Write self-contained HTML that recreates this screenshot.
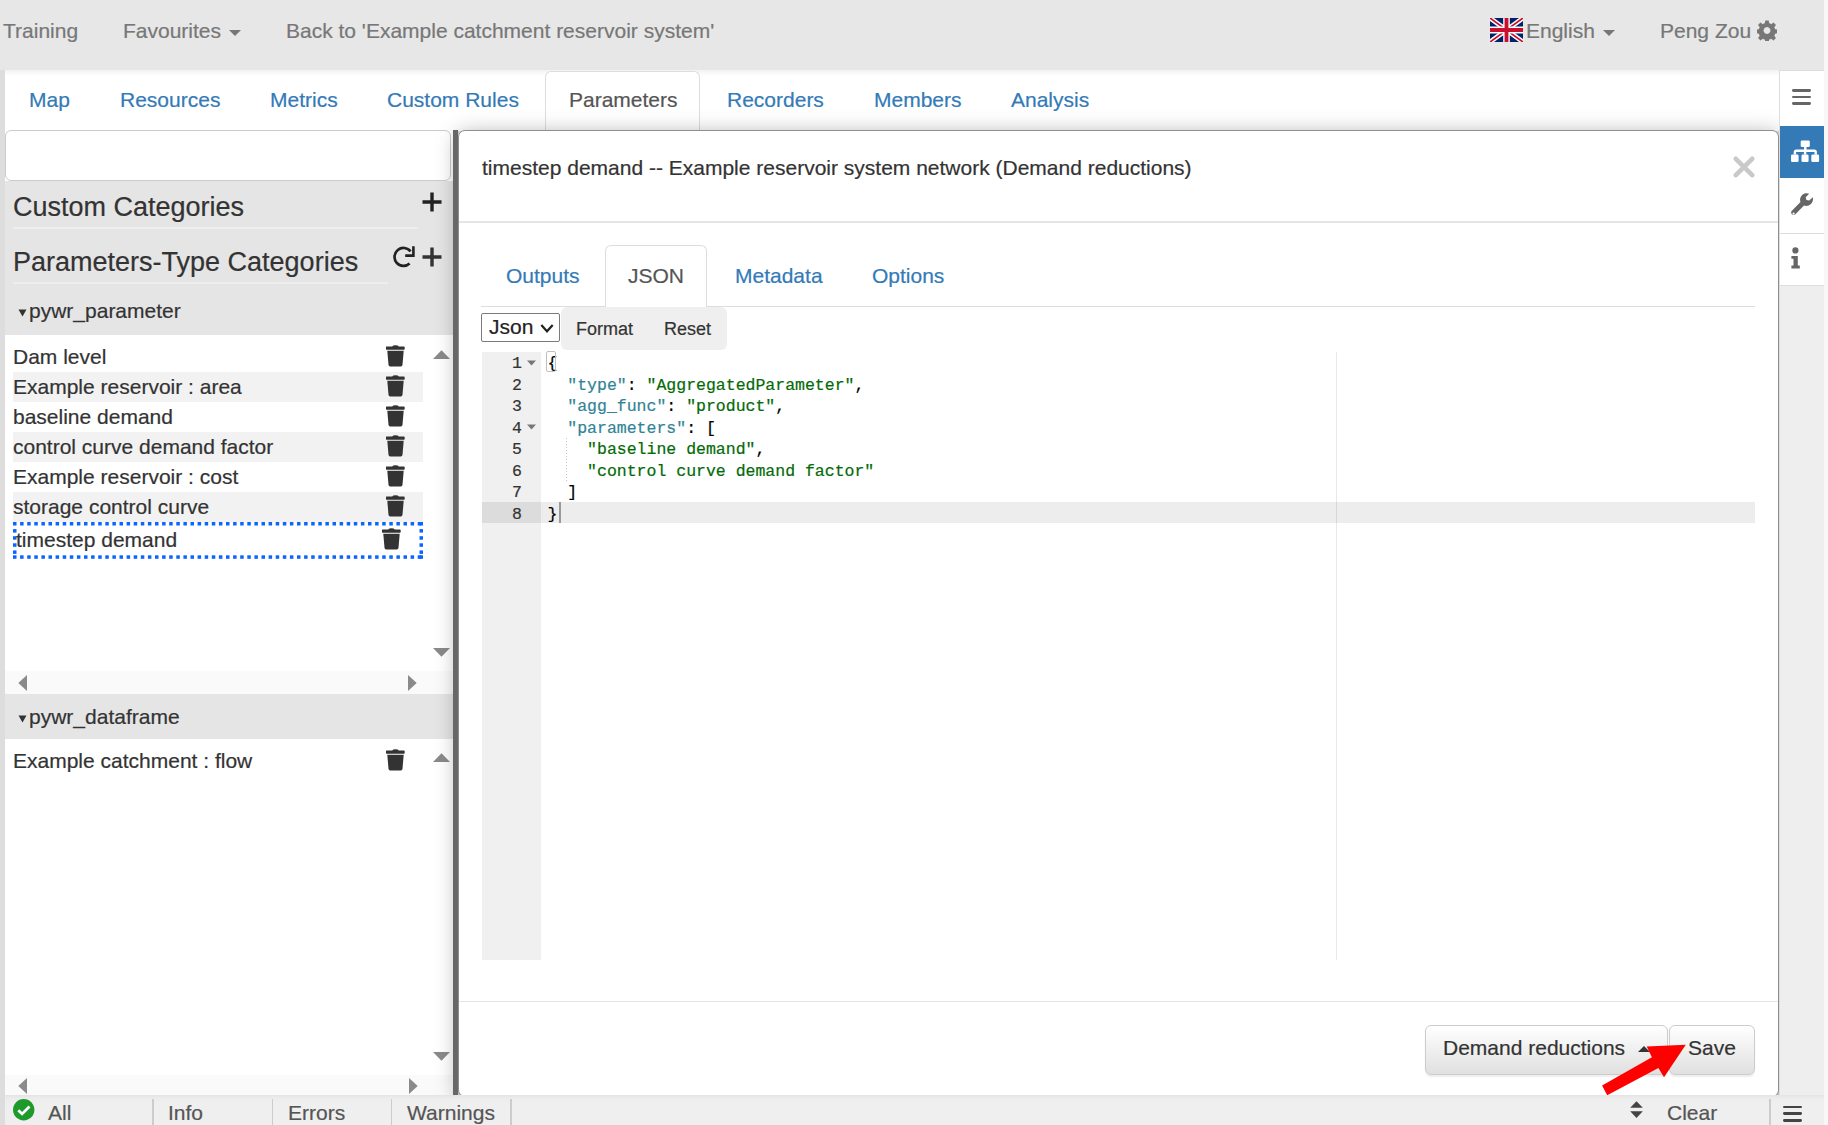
<!DOCTYPE html>
<html><head><meta charset="utf-8">
<style>
*{box-sizing:border-box}
html,body{margin:0;padding:0}
body{width:1828px;height:1125px;overflow:hidden;position:relative;background:#dddddd;font-family:"Liberation Sans",sans-serif;font-size:21px;color:#333}
.a{position:absolute}
.t{position:absolute;white-space:nowrap;line-height:24px}
#nav{left:0;top:0;width:1824px;height:70px;background:#e7e7e7}
#nav .t{color:#777;top:19px}
.caret{position:absolute;width:0;height:0;border-left:6px solid transparent;border-right:6px solid transparent;border-top:6px solid #777}
#tabbar{left:5px;top:70px;width:1774px;height:61px;background:linear-gradient(to bottom,#f2f2f2 0,#fff 6px)}
#tabbar .t{color:#337ab7;top:88px}
#ptab{left:545px;top:71px;width:155px;height:60px;border:1.5px solid #ddd;border-bottom:none;border-radius:6px 6px 0 0;background:#fff}
#left{left:5px;top:130px;width:448px;height:965px;background:#fff;overflow:hidden}
#search{left:5px;top:130px;width:446px;height:51px;border:1.5px solid #ccc;border-radius:6px;background:#fff}
#divider{left:453px;top:130px;width:5px;height:965px;background:#676767}
#modal{left:458px;top:130px;width:1321px;height:966.5px;background:#fff;border:1.5px solid #8f8f8f;border-radius:7px;box-shadow:0 4px 22px rgba(0,0,0,0.35)}
#side{left:1779px;top:70px;width:45px;height:1025px;background:#eee;border-left:1.5px solid #ddd}
#status{left:5px;top:1095px;width:1819px;height:30px;background:linear-gradient(to bottom,#e4e4e4 0,#ececec 3px,#efefef 8px)}
#rstrip{left:1824px;top:0;width:4px;height:1125px;background:#f7f7f7}

.btn{background:linear-gradient(to bottom,#fff 0,#e0e0e0 100%);border:1.5px solid #ccc;box-shadow:inset 0 1.5px 0 rgba(255,255,255,.15),0 1.5px 1.5px rgba(0,0,0,.075)}
.cl{position:absolute;white-space:pre;font-family:"Liberation Mono",monospace;font-size:16.5px;line-height:21.5px;color:#333}
.cl .k{color:#318495}.cl .s{color:#036a07}.cl .p{color:#000}
.t,.cl{-webkit-text-stroke:0.2px currentColor}</style></head><body>
<div id="rstrip" class="a"></div>
<div id="nav" class="a">
  <div class="t" style="left:3px">Training</div>
  <div class="t" style="left:123px">Favourites</div>
  <div class="caret" style="left:229px;top:30px"></div>
  <div class="t" style="left:286px">Back to 'Example catchment reservoir system'</div>
  
<svg class="a" style="left:1490px;top:18px" width="33" height="24" viewBox="0 0 60 40" preserveAspectRatio="none"><rect width="60" height="40" fill="#012169"/><path d="M0 0L60 40M60 0L0 40" stroke="#fff" stroke-width="8"/><path d="M0 0L60 40M60 0L0 40" stroke="#C8102E" stroke-width="3"/><path d="M30 0V40M0 20H60" stroke="#fff" stroke-width="12"/><path d="M30 0V40M0 20H60" stroke="#C8102E" stroke-width="7"/></svg>
<svg class="a" style="left:1757px;top:19.5px" width="20" height="21" viewBox="0 0 20 20"><path fill="#777" fill-rule="evenodd" d="M8.3 0h3.4l0.5 2.8a7.5 7.5 0 0 1 2 0.85l2.35-1.65 2.4 2.4-1.65 2.35a7.5 7.5 0 0 1 0.85 2l2.85 0.5v3.4l-2.85 0.5a7.5 7.5 0 0 1-0.85 2l1.65 2.35-2.4 2.4-2.35-1.65a7.5 7.5 0 0 1-2 0.85l-0.5 2.85h-3.4l-0.5-2.85a7.5 7.5 0 0 1-2-0.85l-2.35 1.65-2.4-2.4 1.65-2.35a7.5 7.5 0 0 1-0.85-2l-2.85-0.5v-3.4l2.85-0.5a7.5 7.5 0 0 1 0.85-2l-1.65-2.35 2.4-2.4 2.35 1.65a7.5 7.5 0 0 1 2-0.85zM10 6.6a3.4 3.4 0 1 0 0.01 0z"/></svg>
<div class="t" style="left:1526px">English</div>
  <div class="caret" style="left:1603px;top:30px"></div>
  <div class="t" style="left:1660px">Peng Zou</div>
</div>
<div id="tabbar" class="a"></div>
<div id="ptab" class="a"></div>
<div id="tabs">
  <div class="t" style="left:29px;top:88px;color:#337ab7">Map</div>
  <div class="t" style="left:120px;top:88px;color:#337ab7">Resources</div>
  <div class="t" style="left:270px;top:88px;color:#337ab7">Metrics</div>
  <div class="t" style="left:387px;top:88px;color:#337ab7">Custom Rules</div>
  <div class="t" style="left:569px;top:88px;color:#555">Parameters</div>
  <div class="t" style="left:727px;top:88px;color:#337ab7">Recorders</div>
  <div class="t" style="left:874px;top:88px;color:#337ab7">Members</div>
  <div class="t" style="left:1011px;top:88px;color:#337ab7">Analysis</div>
</div>
<div id="left" class="a"></div>
<div id="search" class="a"></div>

<div id="lp">
  <div class="a" style="left:5px;top:181px;width:448px;height:154px;background:#e5e5e5"></div>
  <div class="t" style="left:13px;top:192px;font-size:27px;line-height:30px;color:#333">Custom Categories</div>
  <div class="a" style="left:13px;top:227px;width:405px;height:1.5px;background:#eeeeee"></div>
  <svg class="a" style="left:422px;top:192px" width="20" height="20" viewBox="0 0 20 20"><path d="M8.3 0.5h3.4v7.8h7.8v3.4h-7.8v7.8h-3.4v-7.8h-7.8v-3.4h7.8z" fill="#222"/></svg>
  <div class="t" style="left:13px;top:247px;font-size:27px;line-height:30px;color:#333">Parameters-Type Categories</div>
  <div class="a" style="left:13px;top:282px;width:375px;height:1.5px;background:#eeeeee"></div>
  <svg class="a" style="left:393px;top:246px" width="22" height="22" viewBox="0 0 22 22"><path d="M16.6 17.6A9 9 0 1 1 17.6 5.4" fill="none" stroke="#222" stroke-width="2.7"/><path d="M20.4 0.2V9.6H12.2" fill="none" stroke="#222" stroke-width="2.6"/></svg>
  <svg class="a" style="left:422px;top:247px" width="20" height="20" viewBox="0 0 20 20"><path d="M8.3 0.5h3.4v7.8h7.8v3.4h-7.8v7.8h-3.4v-7.8h-7.8v-3.4h7.8z" fill="#333"/></svg>
  <svg class="a" style="left:18px;top:309px" width="9" height="8" viewBox="0 0 9 8"><path d="M0.5 0.5h8l-4 7z" fill="#333"/></svg>
  <div class="t" style="left:29px;top:299px;color:#333">pywr_parameter</div>
  <div class="t" style="left:13px;top:345px;color:#333">Dam level</div><svg class="a" style="left:386px;top:345px" width="19" height="22" viewBox="0 0 19 22"><path d="M6.2 1.6q0.6-1.4 3.3-1.4q2.7 0 3.3 1.4h5.1q0.8 0 0.8 0.8v1.5q0 0.8-0.8 0.8h-17.4q-0.8 0-0.8-0.8v-1.5q0-0.8 0.8-0.8z" fill="#333"/><path d="M1.3 5.8h16.4l-1.2 14q-0.2 1.7-1.7 1.7h-10.6q-1.5 0-1.7-1.7z" fill="#333"/></svg><div class="a" style="left:13px;top:372px;width:410px;height:30px;background:#f2f2f2"></div><div class="t" style="left:13px;top:375px;color:#333">Example reservoir : area</div><svg class="a" style="left:386px;top:375px" width="19" height="22" viewBox="0 0 19 22"><path d="M6.2 1.6q0.6-1.4 3.3-1.4q2.7 0 3.3 1.4h5.1q0.8 0 0.8 0.8v1.5q0 0.8-0.8 0.8h-17.4q-0.8 0-0.8-0.8v-1.5q0-0.8 0.8-0.8z" fill="#333"/><path d="M1.3 5.8h16.4l-1.2 14q-0.2 1.7-1.7 1.7h-10.6q-1.5 0-1.7-1.7z" fill="#333"/></svg><div class="t" style="left:13px;top:405px;color:#333">baseline demand</div><svg class="a" style="left:386px;top:405px" width="19" height="22" viewBox="0 0 19 22"><path d="M6.2 1.6q0.6-1.4 3.3-1.4q2.7 0 3.3 1.4h5.1q0.8 0 0.8 0.8v1.5q0 0.8-0.8 0.8h-17.4q-0.8 0-0.8-0.8v-1.5q0-0.8 0.8-0.8z" fill="#333"/><path d="M1.3 5.8h16.4l-1.2 14q-0.2 1.7-1.7 1.7h-10.6q-1.5 0-1.7-1.7z" fill="#333"/></svg><div class="a" style="left:13px;top:432px;width:410px;height:30px;background:#f2f2f2"></div><div class="t" style="left:13px;top:435px;color:#333">control curve demand factor</div><svg class="a" style="left:386px;top:435px" width="19" height="22" viewBox="0 0 19 22"><path d="M6.2 1.6q0.6-1.4 3.3-1.4q2.7 0 3.3 1.4h5.1q0.8 0 0.8 0.8v1.5q0 0.8-0.8 0.8h-17.4q-0.8 0-0.8-0.8v-1.5q0-0.8 0.8-0.8z" fill="#333"/><path d="M1.3 5.8h16.4l-1.2 14q-0.2 1.7-1.7 1.7h-10.6q-1.5 0-1.7-1.7z" fill="#333"/></svg><div class="t" style="left:13px;top:465px;color:#333">Example reservoir : cost</div><svg class="a" style="left:386px;top:465px" width="19" height="22" viewBox="0 0 19 22"><path d="M6.2 1.6q0.6-1.4 3.3-1.4q2.7 0 3.3 1.4h5.1q0.8 0 0.8 0.8v1.5q0 0.8-0.8 0.8h-17.4q-0.8 0-0.8-0.8v-1.5q0-0.8 0.8-0.8z" fill="#333"/><path d="M1.3 5.8h16.4l-1.2 14q-0.2 1.7-1.7 1.7h-10.6q-1.5 0-1.7-1.7z" fill="#333"/></svg><div class="a" style="left:13px;top:492px;width:410px;height:30px;background:#f2f2f2"></div><div class="t" style="left:13px;top:495px;color:#333">storage control curve</div><svg class="a" style="left:386px;top:495px" width="19" height="22" viewBox="0 0 19 22"><path d="M6.2 1.6q0.6-1.4 3.3-1.4q2.7 0 3.3 1.4h5.1q0.8 0 0.8 0.8v1.5q0 0.8-0.8 0.8h-17.4q-0.8 0-0.8-0.8v-1.5q0-0.8 0.8-0.8z" fill="#333"/><path d="M1.3 5.8h16.4l-1.2 14q-0.2 1.7-1.7 1.7h-10.6q-1.5 0-1.7-1.7z" fill="#333"/></svg><svg class="a" style="left:13px;top:522px" width="411" height="37" viewBox="0 0 411 37"><rect fill="#0a64ff" x="0.0" y="0" width="3.5" height="3.5"/><rect fill="#0a64ff" x="0.0" y="33.3" width="3.5" height="3.5"/><rect fill="#0a64ff" x="7.1" y="0" width="3.5" height="3.5"/><rect fill="#0a64ff" x="7.1" y="33.3" width="3.5" height="3.5"/><rect fill="#0a64ff" x="14.2" y="0" width="3.5" height="3.5"/><rect fill="#0a64ff" x="14.2" y="33.3" width="3.5" height="3.5"/><rect fill="#0a64ff" x="21.3" y="0" width="3.5" height="3.5"/><rect fill="#0a64ff" x="21.3" y="33.3" width="3.5" height="3.5"/><rect fill="#0a64ff" x="28.4" y="0" width="3.5" height="3.5"/><rect fill="#0a64ff" x="28.4" y="33.3" width="3.5" height="3.5"/><rect fill="#0a64ff" x="35.5" y="0" width="3.5" height="3.5"/><rect fill="#0a64ff" x="35.5" y="33.3" width="3.5" height="3.5"/><rect fill="#0a64ff" x="42.6" y="0" width="3.5" height="3.5"/><rect fill="#0a64ff" x="42.6" y="33.3" width="3.5" height="3.5"/><rect fill="#0a64ff" x="49.7" y="0" width="3.5" height="3.5"/><rect fill="#0a64ff" x="49.7" y="33.3" width="3.5" height="3.5"/><rect fill="#0a64ff" x="56.8" y="0" width="3.5" height="3.5"/><rect fill="#0a64ff" x="56.8" y="33.3" width="3.5" height="3.5"/><rect fill="#0a64ff" x="63.9" y="0" width="3.5" height="3.5"/><rect fill="#0a64ff" x="63.9" y="33.3" width="3.5" height="3.5"/><rect fill="#0a64ff" x="71.0" y="0" width="3.5" height="3.5"/><rect fill="#0a64ff" x="71.0" y="33.3" width="3.5" height="3.5"/><rect fill="#0a64ff" x="78.1" y="0" width="3.5" height="3.5"/><rect fill="#0a64ff" x="78.1" y="33.3" width="3.5" height="3.5"/><rect fill="#0a64ff" x="85.2" y="0" width="3.5" height="3.5"/><rect fill="#0a64ff" x="85.2" y="33.3" width="3.5" height="3.5"/><rect fill="#0a64ff" x="92.3" y="0" width="3.5" height="3.5"/><rect fill="#0a64ff" x="92.3" y="33.3" width="3.5" height="3.5"/><rect fill="#0a64ff" x="99.4" y="0" width="3.5" height="3.5"/><rect fill="#0a64ff" x="99.4" y="33.3" width="3.5" height="3.5"/><rect fill="#0a64ff" x="106.5" y="0" width="3.5" height="3.5"/><rect fill="#0a64ff" x="106.5" y="33.3" width="3.5" height="3.5"/><rect fill="#0a64ff" x="113.6" y="0" width="3.5" height="3.5"/><rect fill="#0a64ff" x="113.6" y="33.3" width="3.5" height="3.5"/><rect fill="#0a64ff" x="120.7" y="0" width="3.5" height="3.5"/><rect fill="#0a64ff" x="120.7" y="33.3" width="3.5" height="3.5"/><rect fill="#0a64ff" x="127.8" y="0" width="3.5" height="3.5"/><rect fill="#0a64ff" x="127.8" y="33.3" width="3.5" height="3.5"/><rect fill="#0a64ff" x="134.9" y="0" width="3.5" height="3.5"/><rect fill="#0a64ff" x="134.9" y="33.3" width="3.5" height="3.5"/><rect fill="#0a64ff" x="142.0" y="0" width="3.5" height="3.5"/><rect fill="#0a64ff" x="142.0" y="33.3" width="3.5" height="3.5"/><rect fill="#0a64ff" x="149.1" y="0" width="3.5" height="3.5"/><rect fill="#0a64ff" x="149.1" y="33.3" width="3.5" height="3.5"/><rect fill="#0a64ff" x="156.2" y="0" width="3.5" height="3.5"/><rect fill="#0a64ff" x="156.2" y="33.3" width="3.5" height="3.5"/><rect fill="#0a64ff" x="163.3" y="0" width="3.5" height="3.5"/><rect fill="#0a64ff" x="163.3" y="33.3" width="3.5" height="3.5"/><rect fill="#0a64ff" x="170.4" y="0" width="3.5" height="3.5"/><rect fill="#0a64ff" x="170.4" y="33.3" width="3.5" height="3.5"/><rect fill="#0a64ff" x="177.5" y="0" width="3.5" height="3.5"/><rect fill="#0a64ff" x="177.5" y="33.3" width="3.5" height="3.5"/><rect fill="#0a64ff" x="184.6" y="0" width="3.5" height="3.5"/><rect fill="#0a64ff" x="184.6" y="33.3" width="3.5" height="3.5"/><rect fill="#0a64ff" x="191.7" y="0" width="3.5" height="3.5"/><rect fill="#0a64ff" x="191.7" y="33.3" width="3.5" height="3.5"/><rect fill="#0a64ff" x="198.8" y="0" width="3.5" height="3.5"/><rect fill="#0a64ff" x="198.8" y="33.3" width="3.5" height="3.5"/><rect fill="#0a64ff" x="205.9" y="0" width="3.5" height="3.5"/><rect fill="#0a64ff" x="205.9" y="33.3" width="3.5" height="3.5"/><rect fill="#0a64ff" x="213.0" y="0" width="3.5" height="3.5"/><rect fill="#0a64ff" x="213.0" y="33.3" width="3.5" height="3.5"/><rect fill="#0a64ff" x="220.1" y="0" width="3.5" height="3.5"/><rect fill="#0a64ff" x="220.1" y="33.3" width="3.5" height="3.5"/><rect fill="#0a64ff" x="227.2" y="0" width="3.5" height="3.5"/><rect fill="#0a64ff" x="227.2" y="33.3" width="3.5" height="3.5"/><rect fill="#0a64ff" x="234.3" y="0" width="3.5" height="3.5"/><rect fill="#0a64ff" x="234.3" y="33.3" width="3.5" height="3.5"/><rect fill="#0a64ff" x="241.4" y="0" width="3.5" height="3.5"/><rect fill="#0a64ff" x="241.4" y="33.3" width="3.5" height="3.5"/><rect fill="#0a64ff" x="248.5" y="0" width="3.5" height="3.5"/><rect fill="#0a64ff" x="248.5" y="33.3" width="3.5" height="3.5"/><rect fill="#0a64ff" x="255.6" y="0" width="3.5" height="3.5"/><rect fill="#0a64ff" x="255.6" y="33.3" width="3.5" height="3.5"/><rect fill="#0a64ff" x="262.7" y="0" width="3.5" height="3.5"/><rect fill="#0a64ff" x="262.7" y="33.3" width="3.5" height="3.5"/><rect fill="#0a64ff" x="269.8" y="0" width="3.5" height="3.5"/><rect fill="#0a64ff" x="269.8" y="33.3" width="3.5" height="3.5"/><rect fill="#0a64ff" x="276.9" y="0" width="3.5" height="3.5"/><rect fill="#0a64ff" x="276.9" y="33.3" width="3.5" height="3.5"/><rect fill="#0a64ff" x="284.0" y="0" width="3.5" height="3.5"/><rect fill="#0a64ff" x="284.0" y="33.3" width="3.5" height="3.5"/><rect fill="#0a64ff" x="291.1" y="0" width="3.5" height="3.5"/><rect fill="#0a64ff" x="291.1" y="33.3" width="3.5" height="3.5"/><rect fill="#0a64ff" x="298.2" y="0" width="3.5" height="3.5"/><rect fill="#0a64ff" x="298.2" y="33.3" width="3.5" height="3.5"/><rect fill="#0a64ff" x="305.3" y="0" width="3.5" height="3.5"/><rect fill="#0a64ff" x="305.3" y="33.3" width="3.5" height="3.5"/><rect fill="#0a64ff" x="312.4" y="0" width="3.5" height="3.5"/><rect fill="#0a64ff" x="312.4" y="33.3" width="3.5" height="3.5"/><rect fill="#0a64ff" x="319.5" y="0" width="3.5" height="3.5"/><rect fill="#0a64ff" x="319.5" y="33.3" width="3.5" height="3.5"/><rect fill="#0a64ff" x="326.6" y="0" width="3.5" height="3.5"/><rect fill="#0a64ff" x="326.6" y="33.3" width="3.5" height="3.5"/><rect fill="#0a64ff" x="333.7" y="0" width="3.5" height="3.5"/><rect fill="#0a64ff" x="333.7" y="33.3" width="3.5" height="3.5"/><rect fill="#0a64ff" x="340.8" y="0" width="3.5" height="3.5"/><rect fill="#0a64ff" x="340.8" y="33.3" width="3.5" height="3.5"/><rect fill="#0a64ff" x="347.9" y="0" width="3.5" height="3.5"/><rect fill="#0a64ff" x="347.9" y="33.3" width="3.5" height="3.5"/><rect fill="#0a64ff" x="355.0" y="0" width="3.5" height="3.5"/><rect fill="#0a64ff" x="355.0" y="33.3" width="3.5" height="3.5"/><rect fill="#0a64ff" x="362.1" y="0" width="3.5" height="3.5"/><rect fill="#0a64ff" x="362.1" y="33.3" width="3.5" height="3.5"/><rect fill="#0a64ff" x="369.2" y="0" width="3.5" height="3.5"/><rect fill="#0a64ff" x="369.2" y="33.3" width="3.5" height="3.5"/><rect fill="#0a64ff" x="376.3" y="0" width="3.5" height="3.5"/><rect fill="#0a64ff" x="376.3" y="33.3" width="3.5" height="3.5"/><rect fill="#0a64ff" x="383.4" y="0" width="3.5" height="3.5"/><rect fill="#0a64ff" x="383.4" y="33.3" width="3.5" height="3.5"/><rect fill="#0a64ff" x="390.5" y="0" width="3.5" height="3.5"/><rect fill="#0a64ff" x="390.5" y="33.3" width="3.5" height="3.5"/><rect fill="#0a64ff" x="397.6" y="0" width="3.5" height="3.5"/><rect fill="#0a64ff" x="397.6" y="33.3" width="3.5" height="3.5"/><rect fill="#0a64ff" x="404.7" y="0" width="3.5" height="3.5"/><rect fill="#0a64ff" x="404.7" y="33.3" width="3.5" height="3.5"/><rect fill="#0a64ff" x="0" y="7.1" width="3.5" height="3.5"/><rect fill="#0a64ff" x="406.5" y="7.1" width="3.5" height="3.5"/><rect fill="#0a64ff" x="0" y="14.2" width="3.5" height="3.5"/><rect fill="#0a64ff" x="406.5" y="14.2" width="3.5" height="3.5"/><rect fill="#0a64ff" x="0" y="21.3" width="3.5" height="3.5"/><rect fill="#0a64ff" x="406.5" y="21.3" width="3.5" height="3.5"/><rect fill="#0a64ff" x="0" y="28.4" width="3.5" height="3.5"/><rect fill="#0a64ff" x="406.5" y="28.4" width="3.5" height="3.5"/><rect fill="#0a64ff" x="406.5" y="0" width="3.5" height="3.5"/><rect fill="#0a64ff" x="406.5" y="33.3" width="3.5" height="3.5"/></svg><div class="t" style="left:16px;top:528px;color:#333">timestep demand</div><svg class="a" style="left:382px;top:528px" width="19" height="22" viewBox="0 0 19 22"><path d="M6.2 1.6q0.6-1.4 3.3-1.4q2.7 0 3.3 1.4h5.1q0.8 0 0.8 0.8v1.5q0 0.8-0.8 0.8h-17.4q-0.8 0-0.8-0.8v-1.5q0-0.8 0.8-0.8z" fill="#333"/><path d="M1.3 5.8h16.4l-1.2 14q-0.2 1.7-1.7 1.7h-10.6q-1.5 0-1.7-1.7z" fill="#333"/></svg>
  <div class="a" style="left:5px;top:671px;width:448px;height:23px;background:#fafafa"></div>
  <div class="a" style="left:5px;top:694px;width:448px;height:45px;background:#e5e5e5"></div>
  <svg class="a" style="left:18px;top:715px" width="9" height="8" viewBox="0 0 9 8"><path d="M0.5 0.5h8l-4 7z" fill="#333"/></svg>
  <div class="t" style="left:29px;top:705px;color:#333">pywr_dataframe</div>
  <div class="t" style="left:13px;top:749px;color:#333">Example catchment : flow</div>
  <svg class="a" style="left:386px;top:749px" width="19" height="22" viewBox="0 0 19 22"><path d="M6.2 1.6q0.6-1.4 3.3-1.4q2.7 0 3.3 1.4h5.1q0.8 0 0.8 0.8v1.5q0 0.8-0.8 0.8h-17.4q-0.8 0-0.8-0.8v-1.5q0-0.8 0.8-0.8z" fill="#333"/><path d="M1.3 5.8h16.4l-1.2 14q-0.2 1.7-1.7 1.7h-10.6q-1.5 0-1.7-1.7z" fill="#333"/></svg>
  <div class="a" style="left:5px;top:1075px;width:448px;height:20px;background:#fafafa"></div>
  <svg class="a" style="left:433px;top:350px" width="17" height="9" viewBox="0 0 17 9"><path d="M0 9L8.5 0.3L17 9z" fill="#8a8a8a"/></svg><svg class="a" style="left:433px;top:648px" width="17" height="9" viewBox="0 0 17 9"><path d="M0 0L8.5 8.7L17 0z" fill="#8a8a8a"/></svg><svg class="a" style="left:18px;top:675px" width="9" height="16" viewBox="0 0 9 16"><path d="M9 0L0.3 8L9 16z" fill="#8a8a8a"/></svg><svg class="a" style="left:408px;top:675px" width="9" height="16" viewBox="0 0 9 16"><path d="M0 0L8.7 8L0 16z" fill="#8a8a8a"/></svg><svg class="a" style="left:433px;top:753px" width="17" height="9" viewBox="0 0 17 9"><path d="M0 9L8.5 0.3L17 9z" fill="#8a8a8a"/></svg><svg class="a" style="left:433px;top:1052px" width="17" height="9" viewBox="0 0 17 9"><path d="M0 0L8.5 8.7L17 0z" fill="#8a8a8a"/></svg><svg class="a" style="left:18px;top:1078px" width="9" height="16" viewBox="0 0 9 16"><path d="M9 0L0.3 8L9 16z" fill="#8a8a8a"/></svg><svg class="a" style="left:409px;top:1078px" width="9" height="16" viewBox="0 0 9 16"><path d="M0 0L8.7 8L0 16z" fill="#8a8a8a"/></svg>
  
</div>



<div id="modal" class="a"></div>

<div id="mc">
  <div class="t" style="left:482px;top:156px;color:#333">timestep demand -- Example reservoir system network (Demand reductions)</div>
  <svg class="a" style="left:1733px;top:156px" width="22" height="22" viewBox="0 0 22 22"><path d="M2.8 2.8L19.2 19.2M19.2 2.8L2.8 19.2" stroke="#c9c9c9" stroke-width="4.6" stroke-linecap="round"/></svg>
  <div class="a" style="left:459px;top:221px;width:1319px;height:1.5px;background:#e5e5e5"></div>
  <div class="a" style="left:481px;top:305.5px;width:1274px;height:1.5px;background:#ddd"></div>
  <div class="a" style="left:605px;top:245px;width:101.5px;height:62px;border:1.5px solid #ddd;border-bottom:none;border-radius:6px 6px 0 0;background:#fff"></div>
  <div class="t" style="left:506px;top:264px;color:#337ab7">Outputs</div>
  <div class="t" style="left:628px;top:264px;color:#555">JSON</div>
  <div class="t" style="left:735px;top:264px;color:#337ab7">Metadata</div>
  <div class="t" style="left:872px;top:264px;color:#337ab7">Options</div>
  <div class="a" style="left:561px;top:307px;width:165.5px;height:43px;background:#efefef;border-radius:6px"></div>
  <div class="a" style="left:481.3px;top:313px;width:79px;height:28.7px;border:1.7px solid #7a7a7a;border-radius:2px;background:#fff"></div>
  <div class="t" style="left:489px;top:315px;color:#222;font-size:21px">Json</div>
  <svg class="a" style="left:540.2px;top:323px" width="14" height="11" viewBox="0 0 14 11"><path d="M1.3 2L7 8.3L12.7 2" fill="none" stroke="#222" stroke-width="2.2"/></svg>
  <div class="t" style="left:576px;top:317px;color:#333;font-size:18px">Format</div>
  <div class="t" style="left:664px;top:317px;color:#333;font-size:18px">Reset</div>
  <div class="a" style="left:481.5px;top:351.5px;width:59.5px;height:608px;background:#f0f0f0"></div>
  <div class="a" style="left:1336px;top:351.5px;width:1px;height:608px;background:#e8e8e8"></div>
  <div class="a" style="left:481.5px;top:501.5px;width:59.5px;height:21px;background:#dcdcdc"></div>
  <div class="a" style="left:541px;top:501.5px;width:1214px;height:21px;background:rgba(0,0,0,0.07)"></div>
  <div class="cl" style="top:353.0px;left:512px;width:10px;text-align:right">1</div><svg class="a" style="left:527px;top:359.5px" width="9" height="6" viewBox="0 0 9 6"><path d="M0 0.5h9l-4.5 5z" fill="#777"/></svg><div class="cl" style="top:353.0px;left:547.5px"><span class="p">{</span></div><div class="cl" style="top:374.5px;left:512px;width:10px;text-align:right">2</div><div class="cl" style="top:374.5px;left:547.5px">  <span class="k">"type"</span><span class="p">: </span><span class="s">"AggregatedParameter"</span><span class="p">,</span></div><div class="cl" style="top:396.0px;left:512px;width:10px;text-align:right">3</div><div class="cl" style="top:396.0px;left:547.5px">  <span class="k">"agg_func"</span><span class="p">: </span><span class="s">"product"</span><span class="p">,</span></div><div class="cl" style="top:417.5px;left:512px;width:10px;text-align:right">4</div><svg class="a" style="left:527px;top:424.0px" width="9" height="6" viewBox="0 0 9 6"><path d="M0 0.5h9l-4.5 5z" fill="#777"/></svg><div class="cl" style="top:417.5px;left:547.5px">  <span class="k">"parameters"</span><span class="p">: [</span></div><div class="cl" style="top:439.0px;left:512px;width:10px;text-align:right">5</div><div class="cl" style="top:439.0px;left:547.5px">    <span class="s">"baseline demand"</span><span class="p">,</span></div><div class="cl" style="top:460.5px;left:512px;width:10px;text-align:right">6</div><div class="cl" style="top:460.5px;left:547.5px">    <span class="s">"control curve demand factor"</span></div><div class="cl" style="top:482.0px;left:512px;width:10px;text-align:right">7</div><div class="cl" style="top:482.0px;left:547.5px">  <span class="p">]</span></div><div class="cl" style="top:503.5px;left:512px;width:10px;text-align:right">8</div><div class="cl" style="top:503.5px;left:547.5px"><span class="p">}</span></div>

  <div class="a" style="left:546px;top:351px;width:10px;height:21px;border:1px solid #c0c0c0;border-radius:2px"></div>
  <div class="a" style="left:558.5px;top:501.5px;width:2px;height:21.5px;background:#9a9a9a"></div>
  <div class="a" style="left:565.5px;top:437.5px;width:1px;height:43px;background:repeating-linear-gradient(to bottom,#c8c8c8 0,#c8c8c8 1px,transparent 1px,transparent 3px)"></div>
  <div class="a" style="left:459px;top:1000.5px;width:1319px;height:1.5px;background:#e5e5e5"></div>
  <div class="a btn" style="left:1424.5px;top:1025px;width:243.5px;height:49.5px;border-radius:6px"></div>
  <div class="t" style="left:1443px;top:1036px;color:#333">Demand reductions</div>
  <div class="a" style="left:1638px;top:1046px;width:0;height:0;border-left:6px solid transparent;border-right:6px solid transparent;border-bottom:6px solid #333"></div>
  <div class="a btn" style="left:1669px;top:1025px;width:85.5px;height:49.5px;border-radius:6px"></div>
  <div class="t" style="left:1688px;top:1036px;color:#333">Save</div>
  <svg class="a" style="left:1590px;top:1030px" width="110" height="70" viewBox="1590 1030 110 70"><path d="M1602.1 1085.6L1651.9 1057.2L1646.7 1046.5L1685.8 1044.7L1664 1077.2L1658.4 1067.9L1607.2 1095.3z" fill="#ff0000"/></svg>
</div>


<div id="status" class="a"></div>
<svg class="a" style="left:12.5px;top:1099px" width="22" height="22" viewBox="0 0 22 22"><circle cx="10.7" cy="10.7" r="10.7" fill="#1e9a2a"/><path d="M5.3 11.2l3.8 3.7 7.4-7.4" fill="none" stroke="#fff" stroke-width="2.8"/></svg>
<div class="t" style="left:48px;top:1101px;color:#555">All</div>
<div class="a" style="left:152px;top:1099px;width:1.5px;height:26px;background:#ccc"></div>
<div class="t" style="left:168px;top:1101px;color:#555">Info</div>
<div class="a" style="left:271.5px;top:1099px;width:1.5px;height:26px;background:#ccc"></div>
<div class="t" style="left:288px;top:1101px;color:#555">Errors</div>
<div class="a" style="left:390.5px;top:1099px;width:1.5px;height:26px;background:#ccc"></div>
<div class="t" style="left:407px;top:1101px;color:#555">Warnings</div>
<div class="a" style="left:510px;top:1099px;width:1.5px;height:26px;background:#ccc"></div>
<svg class="a" style="left:1629.5px;top:1101px" width="13" height="18" viewBox="0 0 13 18"><path d="M0.2 6.7L6.5 0.2L12.8 6.7z M0.2 10.2L6.5 17L12.8 10.2z" fill="#444"/></svg>
<div class="t" style="left:1667px;top:1101px;color:#555">Clear</div>
<div class="a" style="left:1769px;top:1099px;width:1.5px;height:26px;background:#ccc"></div>
<div class="a" style="left:1782.5px;top:1105.5px;width:19px;height:2.8px;background:#444;border-radius:1.4px"></div>
<div class="a" style="left:1782.5px;top:1112.2px;width:19px;height:2.8px;background:#444;border-radius:1.4px"></div>
<div class="a" style="left:1782.5px;top:1119px;width:19px;height:2.8px;background:#444;border-radius:1.4px"></div>
<div id="divider" class="a"></div>
<div class="a" style="left:1823px;top:70px;width:1.3px;height:1025px;background:#e3e3e3"></div>
<div id="side" class="a"></div>
<div class="a" style="left:1779px;top:70px;width:45px;height:56px;background:#fff;border-top:1.5px solid #ddd;border-left:1.5px solid #ddd"></div>
<div class="a" style="left:1791.5px;top:89px;width:19px;height:2.8px;background:#666;border-radius:1.4px"></div>
<div class="a" style="left:1791.5px;top:95.7px;width:19px;height:2.8px;background:#666;border-radius:1.4px"></div>
<div class="a" style="left:1791.5px;top:102.4px;width:19px;height:2.8px;background:#666;border-radius:1.4px"></div>
<div class="a" style="left:1780px;top:125.5px;width:43.5px;height:52px;background:#337ab7"></div>
<svg class="a" style="left:1791px;top:139.5px" width="29" height="23" viewBox="0 0 29 23"><rect x="9.7" y="0.4" width="9.1" height="6.6" rx="1.3" fill="#fff"/><path d="M14.3 6.5v4.1M3.9 14.6v-2.6q0-1.3 1.3-1.3h18.2q1.3 0 1.3 1.3v2.6M14.1 10.6v4" fill="none" stroke="#fff" stroke-width="2.4"/><rect x="0" y="14.6" width="7.6" height="7.4" rx="1.3" fill="#fff"/><rect x="10.5" y="14.6" width="7.1" height="7.4" rx="1.3" fill="#fff"/><rect x="20.3" y="14.6" width="7.8" height="7.4" rx="1.3" fill="#fff"/></svg>
<div class="a" style="left:1780px;top:177.5px;width:43.5px;height:56px;background:#fff;border-bottom:1.5px solid #ddd"></div>
<svg class="a" style="left:1790px;top:192.5px" width="25" height="24" viewBox="0 0 25 24"><path d="M22.8 4.2l-3.6 3.4-2.8-0.6-0.7-2.7 3.5-3.5c-2.4-1-5.3-0.5-7.2 1.4-1.9 1.9-2.4 4.6-1.5 6.9l-8.6 8.6c-1 1-1 2.6 0 3.5 1 1 2.6 1 3.5 0l8.6-8.6c2.3 0.9 5 0.4 6.9-1.5 1.9-1.9 2.4-4.6 1.9-6.9z" fill="#666"/><circle cx="3.6" cy="20.6" r="1.1" fill="#fff"/></svg>
<div class="a" style="left:1780px;top:233.5px;width:43.5px;height:52.5px;background:#fff;border-bottom:1.5px solid #ddd"></div>
<svg class="a" style="left:1791px;top:247px" width="10" height="22" viewBox="0 0 10 22"><circle cx="4.4" cy="3.4" r="3.1" fill="#666"/><path d="M0.4 9h6.4v9.6h2v2.8h-8.4v-2.8h2.1v-6.8h-2.1z" fill="#666"/></svg>




</body></html>
